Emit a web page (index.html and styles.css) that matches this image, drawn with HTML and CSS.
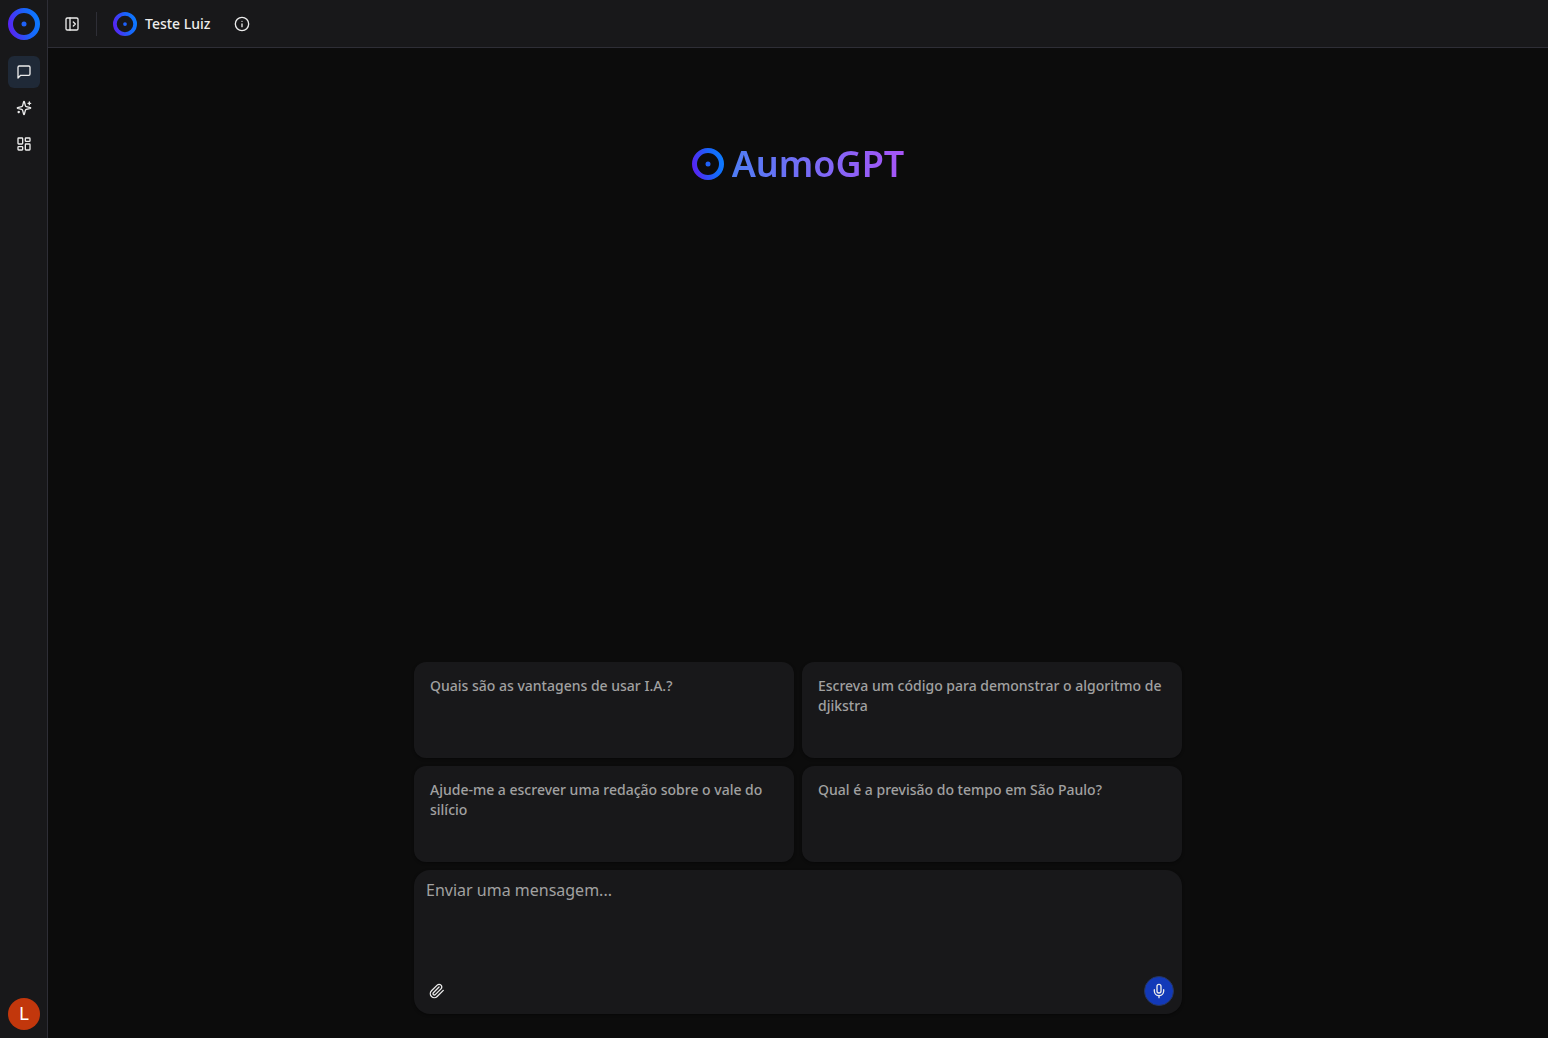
FILE: index.html
```html
<!DOCTYPE html>
<html lang="pt-BR">
<head>
  <meta charset="UTF-8">
  <meta name="viewport" content="width=device-width, initial-scale=1.0">
  <title>AumoGPT</title>
  <link rel="stylesheet" href="styles.css">
</head>
<body>
  <!-- shared shapes -->
  <svg class="defs" aria-hidden="true">
    <defs>
      <linearGradient id="logo-gradient" gradientUnits="userSpaceOnUse" x1="0" y1="20" x2="32" y2="12">
        <stop offset="0" stop-color="#5b1ff2"/>
        <stop offset="0.6" stop-color="#1a63fa"/>
        <stop offset="1" stop-color="#0a7cff"/>
      </linearGradient>
      <symbol id="logo" viewBox="0 0 32 32">
        <circle cx="16" cy="16" r="13.5" fill="none" stroke="url(#logo-gradient)" stroke-width="5"/>
        <circle cx="16" cy="16" r="2.5" fill="#1f62fa"/>
      </symbol>
    </defs>
  </svg>

  <aside class="sidebar">
    <a href="#" class="brand" aria-label="AumoGPT">
      <svg class="logo-md"><use href="#logo"/></svg>
    </a>
    <nav class="nav">
      <a href="#chat" class="nav-item active" aria-label="Chat">
        <svg class="icon" viewBox="0 0 24 24"><path d="M21 15a2 2 0 0 1-2 2H7l-4 4V5a2 2 0 0 1 2-2h14a2 2 0 0 1 2 2z"/></svg>
      </a>
      <a href="#assistentes" class="nav-item" aria-label="Assistentes">
        <svg class="icon" viewBox="0 0 24 24"><path d="M9.937 15.5A2 2 0 0 0 8.5 14.063l-6.135-1.582a.5.5 0 0 1 0-.962L8.5 9.936A2 2 0 0 0 9.937 8.5l1.582-6.135a.5.5 0 0 1 .963 0L14.063 8.5A2 2 0 0 0 15.5 9.937l6.135 1.581a.5.5 0 0 1 0 .964L15.5 14.063a2 2 0 0 0-1.437 1.437l-1.582 6.135a.5.5 0 0 1-.963 0z"/><path d="M20 3v4"/><path d="M22 5h-4"/><path d="M4 17v2"/><path d="M5 18H3"/></svg>
      </a>
      <a href="#painel" class="nav-item" aria-label="Painel">
        <svg class="icon" viewBox="0 0 24 24"><rect x="3" y="3" width="7" height="9" rx="1"/><rect x="14" y="3" width="7" height="5" rx="1"/><rect x="14" y="12" width="7" height="9" rx="1"/><rect x="3" y="16" width="7" height="5" rx="1"/></svg>
      </a>
    </nav>
    <button type="button" class="avatar" aria-label="Conta">L</button>
  </aside>

  <div class="page">
    <header class="topbar">
      <button type="button" class="icon-button" aria-label="Abrir menu">
        <svg class="icon" viewBox="0 0 24 24"><rect x="3" y="3" width="18" height="18" rx="2"/><path d="M9 3v18"/><path d="m14 9 3 3-3 3"/></svg>
      </button>
      <span class="divider"></span>
      <div class="assistant">
        <svg class="logo-sm"><use href="#logo"/></svg>
        <span>Teste Luiz</span>
      </div>
      <button type="button" class="icon-button" aria-label="Informações">
        <svg class="icon" viewBox="0 0 24 24"><circle cx="12" cy="12" r="10"/><path d="M12 16v-4"/><path d="M12 8h.01"/></svg>
      </button>
    </header>

    <main class="chat">
      <div class="hero">
        <svg class="logo-md"><use href="#logo"/></svg>
        <h1>AumoGPT</h1>
      </div>

      <div class="suggestions">
        <button type="button" class="card">Quais são as vantagens de usar I.A.?</button>
        <button type="button" class="card">Escreva um código para demonstrar o algoritmo de djikstra</button>
        <button type="button" class="card">Ajude-me a escrever uma redação sobre o vale do silício</button>
        <button type="button" class="card">Qual é a previsão do tempo em São Paulo?</button>
      </div>

      <form class="composer">
        <textarea id="message" aria-label="Mensagem" placeholder="Enviar uma mensagem..."></textarea>
        <div class="actions">
          <button type="button" class="attach" aria-label="Anexar arquivo">
            <svg class="icon" viewBox="0 0 24 24"><path d="m21.44 11.05-9.19 9.19a6 6 0 0 1-8.49-8.49l8.57-8.57A4 4 0 1 1 18 8.84l-8.59 8.57a2 2 0 0 1-2.83-2.83l8.49-8.48"/></svg>
          </button>
          <button type="button" class="mic" aria-label="Gravar áudio">
            <svg class="icon" viewBox="0 0 24 24"><path d="M12 2a3 3 0 0 0-3 3v7a3 3 0 0 0 6 0V5a3 3 0 0 0-3-3Z"/><path d="M19 10v2a7 7 0 0 1-14 0v-2"/><path d="M12 19v3"/></svg>
          </button>
        </div>
      </form>
    </main>
  </div>
</body>
</html>
```
FILE: styles.css
```css
* {
  box-sizing: border-box;
}

body {
  margin: 0;
  min-height: 100vh;
  display: flex;
  font-family: "Noto Sans", sans-serif;
  font-size: 14px;
  line-height: 20px;
  background-color: #0c0c0c;
  color: #ececec;
}

button,
textarea {
  font: inherit;
  color: inherit;
  border: none;
  background: none;
  padding: 0;
  margin: 0;
}

button {
  cursor: pointer;
}

.defs {
  position: absolute;
  width: 0;
  height: 0;
}

.icon {
  display: block;
  width: 16px;
  height: 16px;
  fill: none;
  stroke: currentColor;
  stroke-width: 2;
  stroke-linecap: round;
  stroke-linejoin: round;
}

.logo-md {
  display: block;
  width: 32px;
  height: 32px;
}

.logo-sm {
  display: block;
  width: 24px;
  height: 24px;
}

/* Sidebar */
.sidebar {
  flex: none;
  width: 48px;
  display: flex;
  flex-direction: column;
  padding: 8px 7px 8px 8px;
  background-color: #18181a;
  border-right: 1px solid #2e2e36;
}

.nav {
  display: flex;
  flex-direction: column;
  gap: 4px;
  margin-top: 16px;
}

.nav-item {
  width: 32px;
  height: 32px;
  display: grid;
  place-items: center;
  border-radius: 6px;
  color: inherit;
}

.nav-item.active {
  background-color: #1f2937;
}

.avatar {
  width: 32px;
  height: 32px;
  margin-top: auto;
  border-radius: 50%;
  background-color: #c2370c;
  color: #ffffff;
  font-family: Roboto, sans-serif;
  font-size: 18px;
}

/* Top bar */
.page {
  flex: 1;
  min-width: 0;
  display: flex;
  flex-direction: column;
}

.topbar {
  display: flex;
  align-items: center;
  height: 48px;
  padding: 0 8px;
  background-color: #18181a;
  border-bottom: 1px solid #2e2e36;
}

.icon-button {
  width: 32px;
  height: 32px;
  display: grid;
  place-items: center;
  border-radius: 6px;
}

.divider {
  width: 1px;
  height: 24px;
  margin: 0 16px 0 8px;
  background-color: #2e2e36;
}

.assistant {
  display: flex;
  align-items: center;
  gap: 8px;
  margin-right: 16px;
  font-weight: 500;
}

/* Chat */
.chat {
  flex: 1;
  width: 100%;
  max-width: 768px;
  margin: 0 auto;
  padding-bottom: 24px;
  display: flex;
  flex-direction: column;
  gap: 8px;
}

.hero {
  display: flex;
  justify-content: center;
  align-items: center;
  gap: 8px;
  margin-top: 96px;
  margin-bottom: auto;
}

h1 {
  margin: 0;
  font-size: 36px;
  line-height: 40px;
  font-weight: 600;
  background: linear-gradient(to right, #4f7df5, #a855f7);
  -webkit-background-clip: text;
  background-clip: text;
  color: transparent;
}

.suggestions {
  display: grid;
  grid-template-columns: 1fr 1fr;
  gap: 8px;
}

.card {
  display: flex;
  align-items: flex-start;
  min-height: 96px;
  padding: 14px 16px;
  border-radius: 12px;
  background-color: #18181a;
  color: #a1a1a1;
  font-weight: 500;
  text-align: left;
  box-shadow: 0 1px 3px rgba(0, 0, 0, 0.4);
}

.composer {
  display: flex;
  flex-direction: column;
  padding: 8px;
  border-radius: 16px;
  background-color: #18181a;
  box-shadow: 0 1px 3px rgba(0, 0, 0, 0.4);
}

textarea {
  height: 98px;
  padding: 0 4px;
  font-size: 16px;
  line-height: 24px;
  resize: none;
  outline: none;
}

textarea::placeholder {
  color: #a1a1a1;
  opacity: 1;
}

.actions {
  display: flex;
  justify-content: space-between;
}

.attach,
.mic {
  width: 30px;
  height: 30px;
  display: grid;
  place-items: center;
  border-radius: 50%;
}

.mic {
  background-color: #1239b8;
  border: 1px solid #27365f;
}
```
